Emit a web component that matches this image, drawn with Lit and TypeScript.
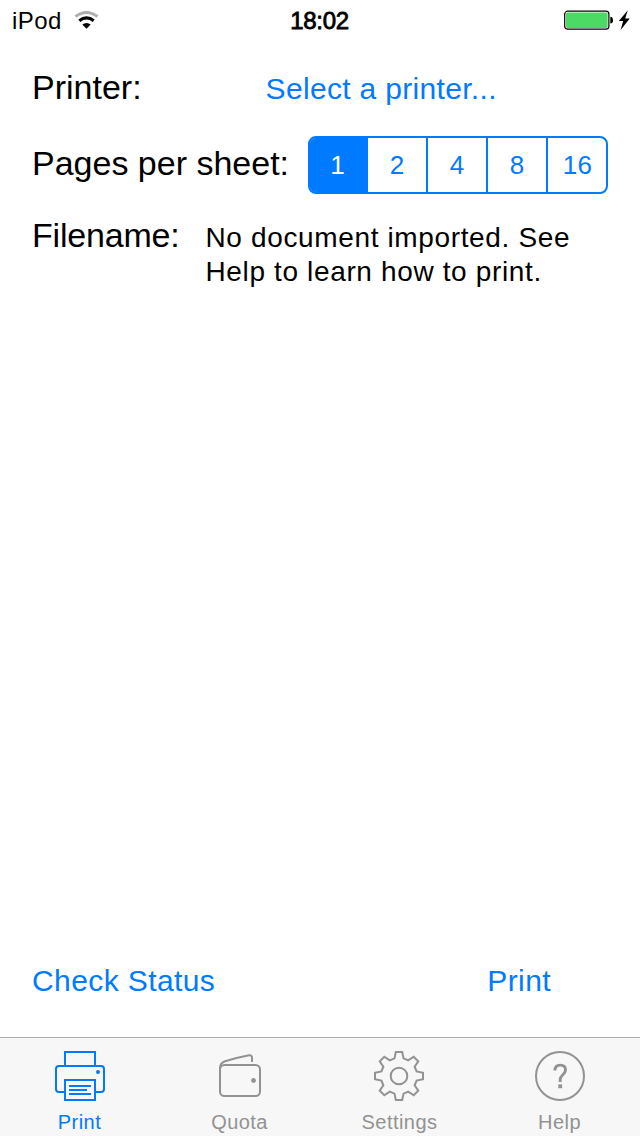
import { LitElement, html, svg, css } from "lit";
import { customElement, state } from "lit/decorators.js";

// Outline of an eight-toothed gear centred on the origin.
const gearPath = (() => {
  const tooth = [[-4.5, -17.6], [-3.2, -24], [3.2, -24], [4.5, -17.6]];
  const points: string[] = [];
  for (let i = 0; i < 8; i++) {
    const a = (i * Math.PI) / 4;
    for (const [x, y] of tooth) {
      const px = x * Math.cos(a) - y * Math.sin(a);
      const py = x * Math.sin(a) + y * Math.cos(a);
      points.push(`${px.toFixed(2)} ${py.toFixed(2)}`);
    }
  }
  return `M${points.join("L")}Z`;
})();

const icons = {
  print: svg`
    <path d="M10 15V1H40V15M10 41H4Q1 41 1 38V18Q1 15 4 15H46Q49 15 49 18V38Q49 41 46 41H40"/>
    <path d="M10 29H40V49H10ZM14 35H36M14 39H32M14 43H36"/>
    <circle cx="43" cy="21" r="2" fill="currentColor" stroke="none"/>`,
  quota: svg`
    <rect x="5" y="14" width="40" height="31" rx="4.500"/>
    <path d="M5 20V17Q5 12 10 10.200Q22 6.500 34 4.200Q37 4 37 7V11"/>
    <circle cx="38.500" cy="29.500" r="2.400" fill="currentColor" stroke="none"/>`,
  settings: svg`
    <g transform="translate(24 25)"><path d="${gearPath}"/><circle r="8.300"/></g>`,
  help: svg`
    <circle cx="25" cy="25" r="24"/>
    <path stroke-width="2.900" d="M19.900 19.600C19.900 16 21.800 14.100 25.200 14.100C28.600 14.100 30.500 16 30.500 18.900C30.500 23.400 25.200 24 25.200 28.500V31"/>
    <rect x="23.300" y="33.400" width="3.800" height="3.800" fill="currentColor" stroke="none"/>`,
};

@customElement("app-root")
export class AppRoot extends LitElement {
  @state() private pages = 1;
  @state() private tab = "Print";

  static styles = css`
    :host {
      display: flex;
      flex-direction: column;
      box-sizing: border-box;
      height: 1136px;
      width: 640px;
      background: #fff;
      color: #000;
      font-family: "Liberation Sans", Arial, sans-serif;
      overflow: hidden;
    }
    button {
      font: inherit;
      color: inherit;
      letter-spacing: inherit;
      background: none;
      border: 0;
      padding: 0;
      margin: 0;
    }
    .status {
      height: 40px;
      display: grid;
      grid-template-columns: 1fr auto 1fr;
      padding: 0 9px 0 12px;
      font-size: 24px;
      line-height: 42px;
    }
    .carrier { display: flex; letter-spacing: 0.4px; }
    .wifi { margin: 11px 0 0 12px; }
    .time { -webkit-text-stroke: 0.8px #000; letter-spacing: -0.3px; padding-right: 4px; }
    .power { display: flex; justify-content: flex-end; }
    .battery { margin-top: 10px; }
    .form { padding: 0 32px; flex: 1; }
    .row { display: flex; }
    .label { font-size: 34px; line-height: 40px; white-space: nowrap; }
    .printer { padding-top: 27px; }
    .select {
      margin-left: 124px;
      padding-top: 3px;
      color: #007aff;
      font-size: 30px;
      line-height: 38px;
      letter-spacing: 0.32px;
    }
    .sheet { padding-top: 28px; justify-content: space-between; }
    .sheet .label { padding-top: 7px; }
    .segments {
      box-sizing: border-box;
      width: 300px;
      height: 58px;
      display: grid;
      grid-template-columns: 58px 58px 60px 60px 60px;
      border: 2px solid #007aff;
      border-radius: 8px;
      overflow: hidden;
      background: linear-gradient(#fff, #fff) padding-box;
      color: #007aff;
      font-size: 26px;
      letter-spacing: 0.2px;
    }
    .segment { border-left: 2px solid #007aff; line-height: 54px; }
    .segment:first-child { border-left: 0; padding-right: 3px; }
    .segment:nth-child(2) { border-left: 0; }
    .segment:last-child { padding-left: 1px; }
    .selected { background: #007aff; color: #fff; box-shadow: 0 0 0 1px #007aff; clip-path: inset(-1px 0 -1px -1px); }
    .file { padding-top: 21px; }
    .file .label { letter-spacing: -0.2px; }
    .message {
      margin-left: 26px;
      padding-top: 6px;
      font-size: 28px;
      line-height: 34px;
      letter-spacing: 0.64px;
      white-space: nowrap;
    }
    .actions {
      display: flex;
      justify-content: space-between;
      padding: 0 89px 37px 32px;
      color: #007aff;
      font-size: 30px;
      line-height: 38px;
      letter-spacing: 0.4px;
    }
    .tabs {
      box-sizing: border-box;
      height: 99px;
      display: grid;
      grid-template-columns: repeat(4, 1fr);
      background: #f7f7f7;
      border-top: 1px solid #acacac;
    }
    .tab {
      display: flex;
      flex-direction: column;
      align-items: center;
      padding-top: 13px;
      color: #929292;
      font-size: 20px;
      line-height: 24px;
      letter-spacing: 0.45px;
    }
    .tab span { padding-right: 1px; }
    .tab.active { color: #007aff; }
    .icon {
      width: 50px;
      height: 50px;
      margin-bottom: 9px;
      overflow: visible;
      fill: none;
      stroke: currentColor;
      stroke-width: 2;
    }
  `;

  private renderTab(name: string, icon: unknown) {
    return html`<button class="tab ${this.tab === name ? "active" : ""}" @click=${() => (this.tab = name)}>
      <svg class="icon" viewBox="0 0 50 50">${icon}</svg><span>${name}</span>
    </button>`;
  }

  render() {
    return html`
      <header class="status">
        <div class="carrier"><span>iPod</span>
          <svg class="wifi" width="26" height="19" viewBox="0 0 26 19" fill="none">
            <path d="M1.500 5.500Q12.500-2.700 23.500 5.500" stroke="#b0b0b0" stroke-width="3"/>
            <path d="M5.300 9.700Q12.500 4.100 19.700 9.700" stroke="#000" stroke-width="3.200"/>
            <path d="M8.300 13.400Q12.500 10.400 16.700 13.400L12.500 17.800Z" fill="#000"/>
          </svg>
        </div>
        <div class="time">18:02</div>
        <div class="power">
          <svg class="battery" width="67" height="22" viewBox="0 0 67 22">
            <rect x=".7" y="1.200" width="44.200" height="18" rx="3" fill="#fff" stroke="#000" stroke-width="1.200"/>
            <rect x="2" y="2.500" width="41.600" height="15.400" rx="1.600" fill="#4cd964"/>
            <path d="M46.300 6.800Q49 7 49 10.200T46.300 13.600Z"/>
            <path d="M63.800.2L54.800 10.900H59.200L56.600 20L65.800 8.500H61.200Z"/>
          </svg>
        </div>
      </header>
      <main class="form">
        <div class="row printer"><span class="label">Printer:</span><button class="select">Select a printer...</button></div>
        <div class="row sheet"><span class="label">Pages per sheet:</span>
          <div class="segments">
            ${[1, 2, 4, 8, 16].map((n) => html`<button class="segment ${this.pages === n ? "selected" : ""}" @click=${() => (this.pages = n)}>${n}</button>`)}
          </div>
        </div>
        <div class="row file"><span class="label">Filename:</span>
          <div class="message">No document imported. See<br>Help to learn how to print.</div>
        </div>
      </main>
      <div class="actions"><button>Check Status</button><button>Print</button></div>
      <nav class="tabs">
        ${this.renderTab("Print", icons.print)}
        ${this.renderTab("Quota", icons.quota)}
        ${this.renderTab("Settings", icons.settings)}
        ${this.renderTab("Help", icons.help)}
      </nav>`;
  }
}
